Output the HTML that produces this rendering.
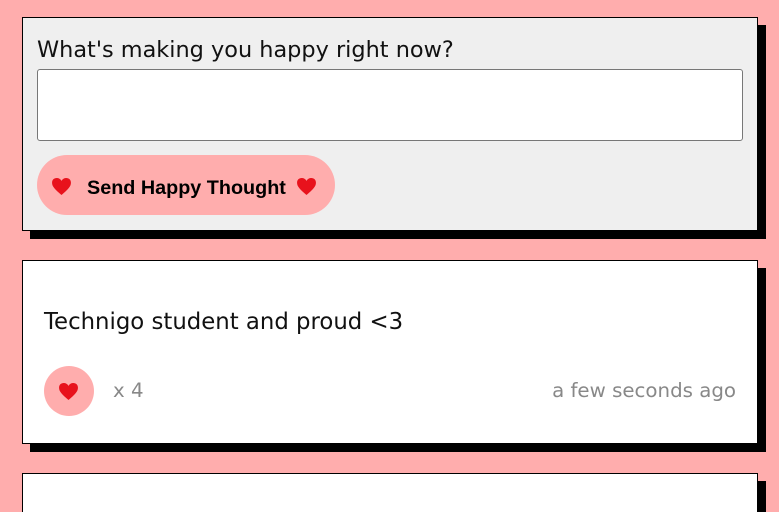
<!DOCTYPE html>
<html><head><style>
html,body{margin:0;padding:0;width:779px;height:512px;overflow:hidden;}
body{background:#ffadad;font-family:"DejaVu Sans",sans-serif;position:relative;}
.card{position:absolute;left:22px;width:734px;border:1px solid #000;box-shadow:8px 8px 0 #000;box-sizing:content-box;}
.c1{top:17px;height:212px;background:#efefef;}
.c2{top:260px;height:182px;background:#fff;}
.c3{top:473px;height:60px;background:#fff;}
.q{position:absolute;left:14px;top:19px;font-size:22.4px;color:#111;white-space:nowrap;}
.inp{position:absolute;left:14px;top:51px;width:704px;height:70px;background:#fff;border:1px solid #777;border-radius:3px;}
.btn{position:absolute;left:14px;top:137px;width:298px;height:60px;border-radius:30px;background:#ffadad;}
.btn span{position:absolute;left:50px;top:22px;font:bold 19.8px "Liberation Sans",Arial,sans-serif;color:#000;white-space:nowrap;}
.h{position:absolute;}
.msg{position:absolute;left:21px;top:48px;font-size:22.8px;color:#111;white-space:nowrap;}
.circ{position:absolute;left:21px;top:105px;width:50px;height:50px;border-radius:50%;background:#ffadad;}
.cnt{position:absolute;left:90px;top:118px;font-size:19.8px;color:#888;}
.time{position:absolute;right:21px;top:118px;font-size:19.8px;color:#888;white-space:nowrap;}
</style></head><body>
<svg width="0" height="0" style="position:absolute"><defs><path id="hp" d="M10 18 C3 12 0 9 0 5 C0 2 2 0 5 0 C7 0 9 1 10 3 C11 1 13 0 15 0 C18 0 20 2 20 5 C20 9 17 12 10 18Z"/></defs></svg>
<div class="card c1">
<div class="q">What's making you happy right now?</div>
<div class="inp"></div>
<div class="btn">
<svg class="h" style="left:15px;top:23px" width="19" height="17" viewBox="0 0 20 18"><use href="#hp" fill="#e8121c"/></svg>
<span>Send Happy Thought</span>
<svg class="h" style="left:260px;top:23px" width="19" height="17" viewBox="0 0 20 18"><use href="#hp" fill="#e8121c"/></svg>
</div>
</div>
<div class="card c2">
<div class="msg">Technigo student and proud &lt;3</div>
<div class="circ"><svg class="h" style="left:15px;top:17px" width="19" height="17" viewBox="0 0 20 18"><use href="#hp" fill="#e8121c"/></svg></div>
<div class="cnt">x 4</div>
<div class="time">a few seconds ago</div>
</div>
<div class="card c3"></div>
</body></html>
